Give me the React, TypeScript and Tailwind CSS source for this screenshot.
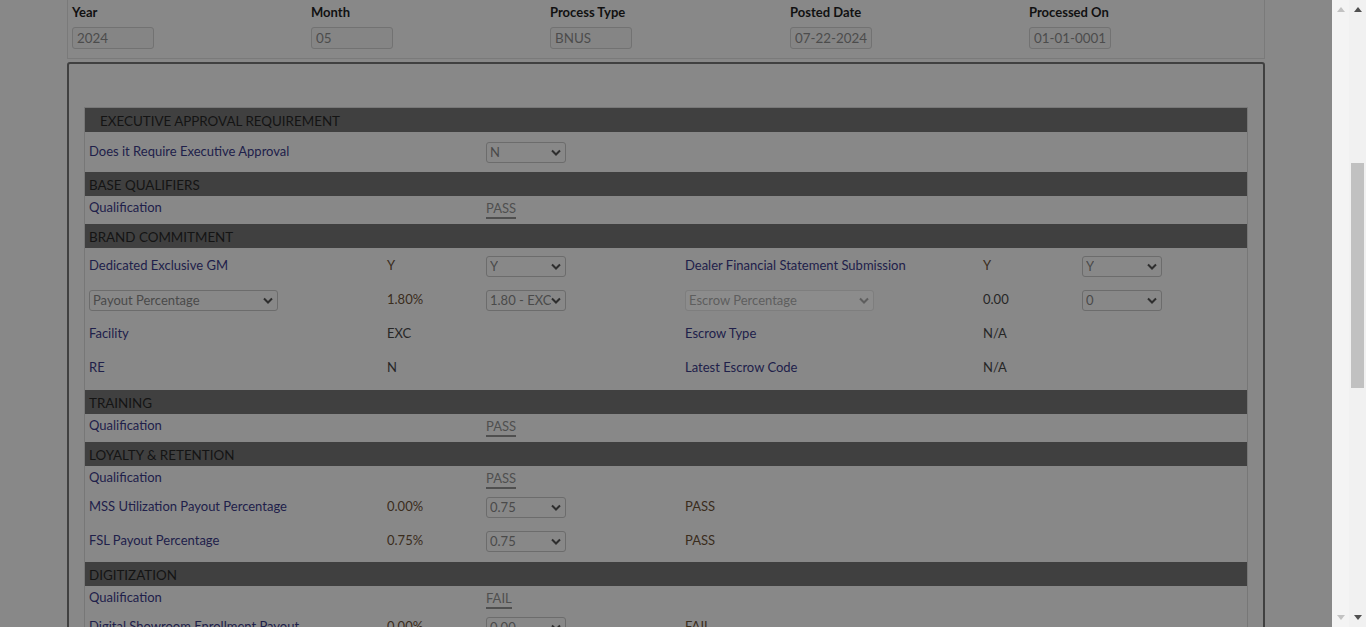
import React from "react";

const font = { fontFamily: "Lato, 'Open Sans', sans-serif" };

function Chevron({ color = "#2e2e2e" }: { color?: string }) {
  return (
    <svg width="10" height="7" viewBox="0 0 10 7" fill="none">
      <path d="M1 1.5 L5 5.5 L9 1.5" stroke={color} strokeWidth="2" />
    </svg>
  );
}

function Select({ value, width = "w-[80px]", disabled = false }: { value: string; width?: string; disabled?: boolean }) {
  return (
    <div
      className={`${width} h-[21px] rounded-[3px] border flex items-center justify-between pl-[3px] pr-[4px] text-[13px] overflow-hidden ${
        disabled ? "border-[#7e7e7e] bg-[#8c8c8c] text-[#5e5e5e]" : "border-[#6c6c6c] text-[#4a4a4a]"
      }`}
    >
      <span className="whitespace-nowrap overflow-hidden pt-[2px]">{value}</span>
      <Chevron color={disabled ? "#5e5e5e" : "#2e2e2e"} />
    </div>
  );
}

function Header({ title, indent = false }: { title: string; indent?: boolean }) {
  return (
    <div
      className={`h-[24px] bg-[#404040] flex items-center pt-[2px] text-[13.4px] text-[#141414] ${indent ? "pl-[15px]" : "pl-[4px]"}`}
    >
      {title}
    </div>
  );
}

function Pass({ text }: { text: string }) {
  return <span className="text-[#4f4f4f] border-b-2 border-[#4f4f4f] leading-[15px] pb-[1px] mt-[3px]">{text}</span>;
}

function QualRow({ result }: { result: string }) {
  return (
    <div className="grid grid-cols-[298px_99px_199px_298px_99px_1fr] h-[24px] items-center">
      <div className="pl-[4px] text-[#20204a]">Qualification</div>
      <div />
      <div className="pl-[4px] flex">
        <Pass text={result} />
      </div>
    </div>
  );
}

type Cell = React.ReactNode;

function Row({ cells, h = "h-[34px]" }: { cells: Cell[]; h?: string }) {
  return (
    <div className={`grid grid-cols-[298px_99px_199px_298px_99px_1fr] ${h} items-center`}>
      {cells.map((c, i) => (
        <div key={i} className="pl-[4px]">
          {c}
        </div>
      ))}
    </div>
  );
}

const L = ({ t }: { t: string }) => <span className="text-[#20204a]">{t}</span>;
const V = ({ t }: { t: string }) => <span className="text-[#3a2c1c]">{t}</span>;
const D = ({ t }: { t: string }) => <span className="text-[#262626]">{t}</span>;

const topFields = [
  { label: "Year", value: "2024" },
  { label: "Month", value: "05" },
  { label: "Process Type", value: "BNUS" },
  { label: "Posted Date", value: "07-22-2024" },
  { label: "Processed On", value: "01-01-0001" },
];

function Arrow({ up, color }: { up: boolean; color: string }) {
  return (
    <svg width="8" height="5" viewBox="0 0 8 5">
      <path d={up ? "M0 5 L4 0 L8 5 Z" : "M0 0 L8 0 L4 5 Z"} fill={color} />
    </svg>
  );
}

export default function App() {
  return (
    <div className="flex w-[1366px] h-[627px] overflow-hidden" style={font}>
      <div className="w-[1332px] h-[627px] bg-[#888888] overflow-hidden text-[13px]">
        <div className="ml-[67px] w-[1198px]">
          {/* filter box */}
          <div className="border-x border-b border-[#7a7a7a] pt-[3px] pb-[9px] pl-[4px] grid grid-cols-[239px_239px_240px_239px_1fr]">
            {topFields.map((f) => (
              <div key={f.label} className="flex flex-col">
                <span className="font-bold text-[#111111] leading-[18px]">{f.label}</span>
                <div className="mt-[6px] w-[82px] h-[22px] rounded-[3px] border border-[#727272] bg-[#858585] text-[#4c4c4c] text-[13.4px] pl-[4px] pt-[1px] flex items-center">
                  {f.value}
                </div>
              </div>
            ))}
          </div>

          {/* main panel */}
          <div className="mt-[3px] border-2 border-[#404040] rounded-[3px] pt-[43px] pl-[15px] pr-[15px] h-[600px]">
            <div className="border-x border-t border-[#777777] w-[1164px]">
              <Header title="EXECUTIVE APPROVAL REQUIREMENT" indent />
              <Row
                h="h-[40px]"
                cells={[<L t="Does it Require Executive Approval" />, null, <Select value="N" />]}
              />

              <Header title="BASE QUALIFIERS" />
              <div className="pb-[4px]">
                <QualRow result="PASS" />
              </div>

              <Header title="BRAND COMMITMENT" />
              <div className="pt-[1px] pb-[5px]">
                <Row
                  cells={[
                    <L t="Dedicated Exclusive GM" />,
                    <V t="Y" />,
                    <Select value="Y" />,
                    <L t="Dealer Financial Statement Submission" />,
                    <V t="Y" />,
                    <Select value="Y" />,
                  ]}
                />
                <Row
                  cells={[
                    <Select value="Payout Percentage" width="w-[189px]" />,
                    <V t="1.80%" />,
                    <Select value="1.80 - EXC" />,
                    <Select value="Escrow Percentage" width="w-[189px]" disabled />,
                    <D t="0.00" />,
                    <Select value="0" />,
                  ]}
                />
                <Row cells={[<L t="Facility" />, <D t="EXC" />, null, <L t="Escrow Type" />, <D t="N/A" />]} />
                <Row cells={[<L t="RE" />, <D t="N" />, null, <L t="Latest Escrow Code" />, <D t="N/A" />]} />
              </div>

              <Header title="TRAINING" />
              <div className="pb-[4px]">
                <QualRow result="PASS" />
              </div>

              <Header title="LOYALTY & RETENTION" />
              <div className="pb-[4px]">
                <QualRow result="PASS" />
                <Row
                  cells={[<L t="MSS Utilization Payout Percentage" />, <V t="0.00%" />, <Select value="0.75" />, <V t="PASS" />]}
                />
                <Row cells={[<L t="FSL Payout Percentage" />, <V t="0.75%" />, <Select value="0.75" />, <V t="PASS" />]} />
              </div>

              <Header title="DIGITIZATION" />
              <div className="pb-[4px]">
                <QualRow result="FAIL" />
                <Row
                  cells={[<L t="Digital Showroom Enrollment Payout" />, <V t="0.00%" />, <Select value="0.00" />, <V t="FAIL" />]}
                />
              </div>
            </div>
          </div>
        </div>
      </div>

      {/* inner disabled scrollbar */}
      <div className="w-[17px] h-[627px] bg-[#f4f4f4] flex flex-col items-center justify-between py-[7px]">
        <Arrow up color="#c2c2c2" />
        <Arrow up={false} color="#c2c2c2" />
      </div>

      {/* page scrollbar */}
      <div className="w-[17px] h-[627px] bg-[#f1f1f1] flex flex-col items-center py-[7px]">
        <Arrow up color="#505050" />
        <div className="mt-[151px] w-[13px] h-[225px] bg-[#c1c1c1]" />
        <div className="flex-1" />
        <Arrow up={false} color="#505050" />
      </div>
    </div>
  );
}
